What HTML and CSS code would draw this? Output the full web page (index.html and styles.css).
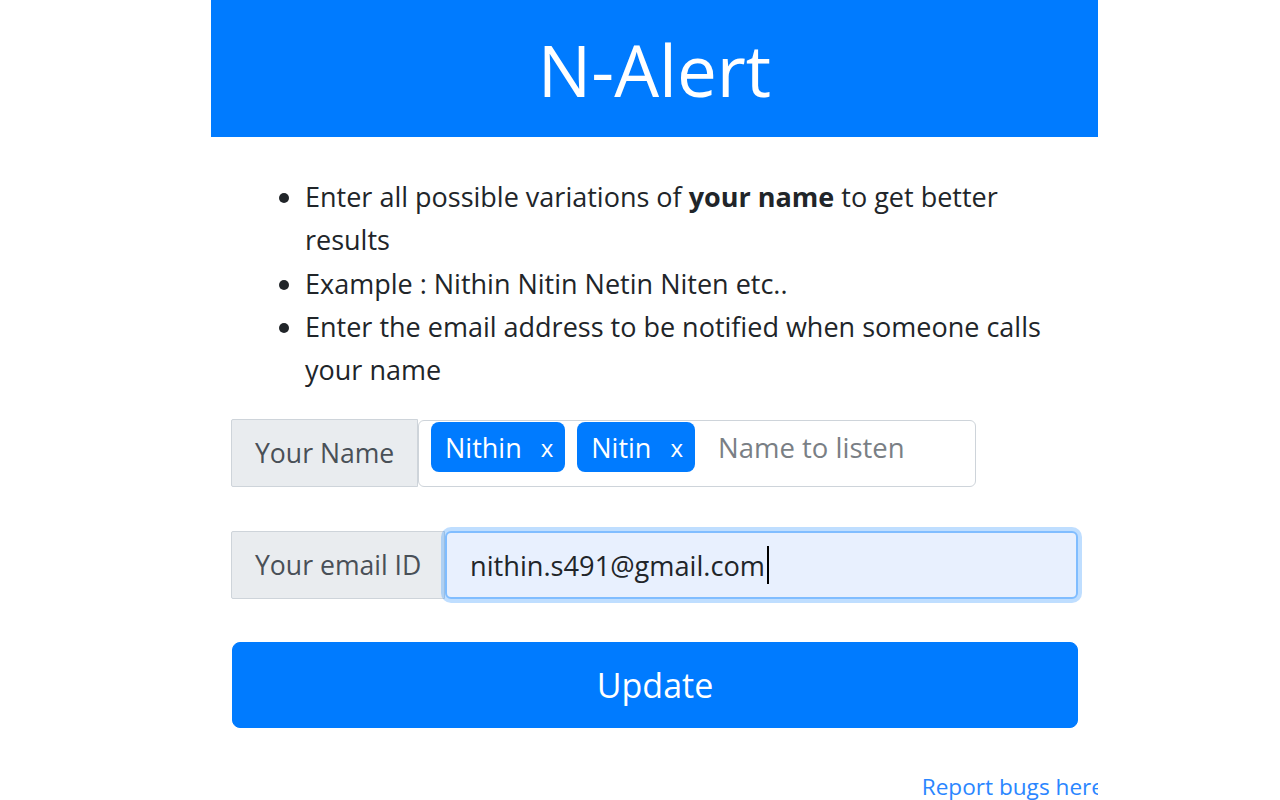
FILE: index.html
```html
<!DOCTYPE html>
<html lang="en">
<head>
<meta charset="utf-8">
<title>N-Alert</title>
<link rel="stylesheet" href="styles.css">
</head>
<body>
<div class="popup">
  <header class="banner">
    <h1 class="title">N-Alert</h1>
  </header>
  <main class="content">
    <ul class="tips">
      <li>Enter all possible variations of <b>your name</b> to get better results</li>
      <li>Example : Nithin Nitin Netin Niten etc..</li>
      <li>Enter the email address to be notified when someone calls your name</li>
    </ul>
    <div class="group group-name">
      <span class="addon addon-name">Your Name</span>
      <div class="tags">
        <span class="tag">Nithin<span class="tag-x">x</span></span>
        <span class="tag">Nitin<span class="tag-x">x</span></span>
        <span class="placeholder">Name to listen</span>
      </div>
    </div>
    <div class="group group-email">
      <span class="addon addon-email">Your email ID</span>
      <div class="email">nithin.s491@gmail.com<span class="caret"></span></div>
    </div>
    <button class="update" type="button">Update</button>
    <div class="footer"><a class="report" href="#">Report bugs here</a></div>
  </main>
</div>
</body>
</html>
```
FILE: styles.css
```css
html, body {
  margin: 0;
  padding: 0;
  background: #ffffff;
}
body {
  font-family: "Open Sans", "Noto Sans", sans-serif;
  color: #212529;
}
.popup {
  width: 887px;
  height: 800px;
  margin-left: 211px;
  overflow: hidden;
}
.banner {
  background: #007bff;
  height: 137px;
  display: flex;
  align-items: center;
  justify-content: center;
}
.title {
  margin: 0;
  color: #ffffff;
  font-size: 71px;
  font-weight: 400;
  line-height: 1;
  padding-top: 2px;
}
.content {
  padding: 0 20px;
}
.tips {
  margin: 38px 0 28px;
  padding-left: 74px;
  font-size: 27px;
  line-height: 43.3px;
  color: #212529;
}
.tips b {
  font-weight: 700;
}
.group {
  display: flex;
  height: 68px;
  font-size: 26.6px;
}
.addon {
  display: flex;
  align-items: center;
  background: #e9ecef;
  border: 1px solid #ced4da;
  color: #495057;
  padding: 0 22px 0 23px;
  box-sizing: border-box;
  border-radius: 2px 0 0 2px;
}
.addon-name {
  width: 187px;
}
.tags {
  width: 558px;
  margin-top: 1px;
  height: 67px;
  box-sizing: border-box;
  border: 1px solid #ced4da;
  border-radius: 6px;
  display: flex;
  align-items: flex-start;
  gap: 12px;
  padding: 1px 0 0 12px;
}
.tag {
  display: inline-flex;
  align-items: center;
  height: 50px;
  background: #007bff;
  color: #ffffff;
  border-radius: 8px;
  padding: 0 12px 0 14px;
  font-size: 27px;
  box-sizing: border-box;
}
.tag-x {
  margin-left: 19px;
  font-size: 24px;
}
.placeholder {
  height: 50px;
  display: flex;
  align-items: center;
  color: #7a7f85;
  font-size: 27.5px;
  margin-left: 11px;
}
.group-email {
  margin-top: 44px;
}
.addon-email {
  width: 214px;
}
.email {
  flex: 1;
  display: flex;
  align-items: center;
  background: #e8f0fe;
  border: 2px solid #80bdff;
  border-radius: 6px;
  box-shadow: 0 0 0 4px rgba(0, 123, 255, 0.25);
  padding: 0 0 0 23px;
  color: #212529;
  font-size: 27.2px;
  box-sizing: border-box;
}
.caret {
  display: inline-block;
  width: 2px;
  height: 38px;
  background: #000000;
  margin-left: 2px;
}
.update {
  display: block;
  width: 846px;
  height: 86px;
  margin: 43px 0 0 1px;
  background: #007bff;
  border: 1px solid #007bff;
  border-radius: 8px;
  color: #ffffff;
  font-family: "Open Sans", "Noto Sans", sans-serif;
  font-size: 34px;
  cursor: pointer;
}
.footer {
  display: flex;
  justify-content: flex-end;
  margin-top: 43px;
  margin-right: -26px;
}
.report {
  color: #2a86ff;
  text-decoration: none;
  font-size: 22.6px;
}
```
